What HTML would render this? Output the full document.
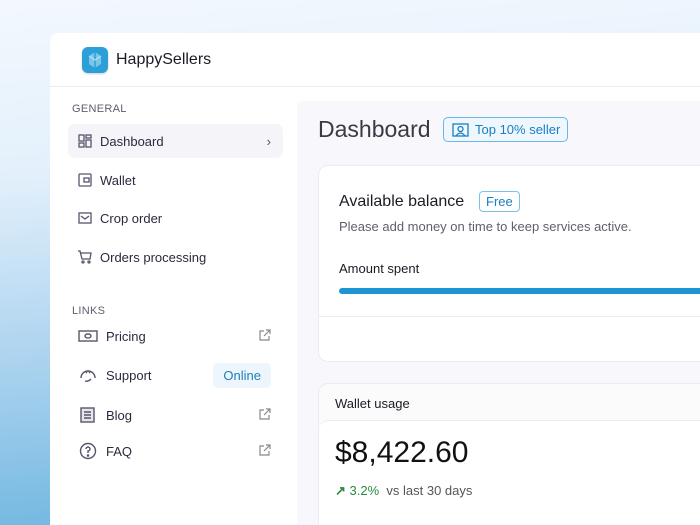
<!DOCTYPE html>
<html style="width:700px;height:525px;overflow:hidden"><head><style>
*{box-sizing:border-box;margin:0;padding:0}
body{width:700px;height:525px;overflow:hidden;font-family:"Liberation Sans",sans-serif;background:linear-gradient(175deg,#f3f8fe 0%,#e3f0fb 30%,#a6d0ee 65%,#62b0dc 100%);position:relative}
.win{position:absolute;left:50px;top:33px;width:650px;height:492px;background:#fff;border-radius:8px 0 0 0;overflow:hidden}
.hdr{height:54px;border-bottom:1px solid #ececf0;display:flex;align-items:center;padding-left:32px}
.logo{width:26px;height:26px;border-radius:6px;background:#2a9fd8;margin-right:8px;position:relative;box-shadow:0 1px 2px rgba(0,0,0,.2)}
.brand{font-size:16px;color:#1b1b24}
.side{position:absolute;left:0;top:55px;width:247px;bottom:0}
.sec{font-size:11px;color:#5e5e6e;letter-spacing:.3px;position:absolute;left:22px}
.it{position:absolute;left:18px;width:215px;height:34px;display:flex;align-items:center;font-size:13px;color:#2a2a3e;border-radius:7px}
.it svg{margin-left:10px;margin-right:8px}
.act{background:#f5f4f9}
.ext{position:absolute;right:12px}
.main{position:absolute;left:247px;top:68px;right:0;bottom:0;background:#f8f8fc;border-top-left-radius:6px}
.card{position:absolute;background:#fff;border:1px solid #ebebf0;border-radius:10px}
</style></head><body>
<div class="win">
 <div class="hdr"><div class="logo"><svg width="26" height="26" viewBox="0 0 26 26"><path d="M13 5 L19 9 L19 17 L13 21 L7 17 L7 9Z" fill="#8fd0f0" opacity=".8"/><path d="M13 5 L13 21" stroke="#2a9fd8" stroke-width="1.5"/><path d="M7 9 L13 13 L19 9" fill="none" stroke="#c5e8f8" stroke-width="1"/></svg></div><span class="brand">HappySellers</span></div>
 <div class="side">
  <div class="sec" style="top:15px">GENERAL</div>
  <div class="it act" style="top:36px"><svg width="14" height="14" viewBox="0 0 14 14" fill="none" stroke="#55556a" stroke-width="1.3"><rect x="1" y="1" width="5" height="6"/><rect x="8" y="1" width="5" height="3"/><rect x="1" y="9" width="5" height="4"/><rect x="8" y="6" width="5" height="7"/></svg>Dashboard<span class="ext" style="font-size:13px;color:#555;right:12px">›</span></div>
  <div class="it" style="top:75px"><svg width="14" height="14" viewBox="0 0 14 14" fill="none" stroke="#55556a" stroke-width="1.3"><rect x="1" y="1" width="12" height="12" rx="1"/><rect x="6" y="5" width="5" height="4"/></svg>Wallet</div>
  <div class="it" style="top:113px"><svg width="14" height="14" viewBox="0 0 14 14" fill="none" stroke="#55556a" stroke-width="1.3"><rect x="1" y="2" width="12" height="10"/><path d="M3 5 L7 8 L11 5"/></svg>Crop order</div>
  <div class="it" style="top:152px"><svg width="14" height="14" viewBox="0 0 14 14" fill="none" stroke="#55556a" stroke-width="1.3"><path d="M0 1h2l2 8h8l1-6H3"/><circle cx="5" cy="12" r="1"/><circle cx="11" cy="12" r="1"/></svg>Orders processing</div>
  <div class="sec" style="top:217px">LINKS</div>
  <div class="it" style="top:231px"><svg width="20" height="14" viewBox="0 0 20 14" fill="none" stroke="#55556a" stroke-width="1.4"><rect x="1" y="2" width="18" height="10"/><ellipse cx="10" cy="7" rx="3" ry="2"/></svg>Pricing<span class="ext"><svg width="12" height="12" viewBox="0 0 12 12" fill="none" stroke="#888" stroke-width="1.2" style="margin:0"><path d="M5 2H1v9h9V7M7 1h4v4M11 1 5 7"/></svg></span></div>
  <div class="it" style="top:270px"><svg width="20" height="16" viewBox="0 0 20 16" fill="none" stroke="#55556a" stroke-width="1.4"><path d="M3 11 A7 7 0 0 1 17 11"/><path d="M7 14 Q10 15 13 12"/><path d="M8 5l1 1M12 5l-1 1"/></svg>Support<span class="ext" style="background:#eef6fd;color:#1c7fb8;font-size:13px;padding:5px 10px;border-radius:5px;right:12px">Online</span></div>
  <div class="it" style="top:310px"><svg width="20" height="16" viewBox="0 0 20 16" fill="none" stroke="#55556a" stroke-width="1.4"><rect x="3" y="1" width="13" height="14" fill="#e6e6ee"/><path d="M6 5h7M6 8h7M6 11h7"/></svg>Blog<span class="ext"><svg width="12" height="12" viewBox="0 0 12 12" fill="none" stroke="#888" stroke-width="1.2" style="margin:0"><path d="M5 2H1v9h9V7M7 1h4v4M11 1 5 7"/></svg></span></div>
  <div class="it" style="top:346px"><svg width="20" height="18" viewBox="0 0 20 18" fill="none" stroke="#55556a" stroke-width="1.4"><circle cx="10" cy="9" r="7.5"/><path d="M8 7a2 2 0 1 1 2 2v2"/><circle cx="10" cy="13.5" r=".6" fill="#55556a"/></svg>FAQ<span class="ext"><svg width="12" height="12" viewBox="0 0 12 12" fill="none" stroke="#888" stroke-width="1.2" style="margin:0"><path d="M5 2H1v9h9V7M7 1h4v4M11 1 5 7"/></svg></span></div>
 </div>
 <div class="main">
  <div style="position:absolute;left:21px;top:15px;font-size:23px;color:#3a3a44">Dashboard</div>
  <div style="position:absolute;left:146px;top:16px;height:25px;border:1px solid #6bb6e6;border-radius:5px;background:#eef7fe;color:#1a7ec0;font-size:13px;display:flex;align-items:center;padding:0 7px 0 8px"><svg width="17" height="14" viewBox="0 0 17 14" fill="none" stroke="#1a7ec0" stroke-width="1.3" style="margin-right:6px"><rect x="1" y="1" width="15" height="12"/><circle cx="8.5" cy="6" r="2.5"/><path d="M4 13 Q8.5 7 13 13"/></svg>Top 10% seller</div>
  <div class="card" style="left:21px;top:64px;width:420px;height:197px">
   <div style="position:absolute;left:20px;top:27px;font-size:16px;color:#1b1b24">Available balance</div>
   <div style="position:absolute;left:160px;top:25px;border:1px solid #7cc0ec;border-radius:4px;color:#1a7ec0;font-size:13px;padding:2px 6px">Free</div>
   <div style="position:absolute;left:20px;top:53px;font-size:13px;color:#5f5f6e">Please add money on time to keep services active.</div>
   <div style="position:absolute;left:20px;top:95px;font-size:13px;color:#1b1b24">Amount spent</div>
   <div style="position:absolute;left:20px;top:122px;right:0;height:6px;background:#1c95d2;border-radius:3px 0 0 3px"></div>
   <div style="position:absolute;left:0;right:0;top:150px;border-top:1px solid #ececf0"></div>
  </div>
  <div class="card" style="left:21px;top:282px;width:420px;height:200px;background:#fbfbfc">
   <div style="position:absolute;left:16px;top:12px;font-size:13px;color:#1b1b24">Wallet usage</div>
   <div style="position:absolute;left:0;right:0;top:36px;bottom:0;background:#fff;border-top:1px solid #ececf0;border-radius:10px 0 0 0">
    <div style="position:absolute;left:16px;top:15px;font-size:30px;color:#111">$8,422.60</div>
    <div style="position:absolute;left:16px;top:62px;font-size:13px;color:#555"><span style="color:#2b8a3e;font-weight:bold">↗</span> <span style="color:#2b8a3e">3.2%</span>&nbsp; vs last 30 days</div>
   </div>
  </div>
 </div>
</div>
</body></html>
